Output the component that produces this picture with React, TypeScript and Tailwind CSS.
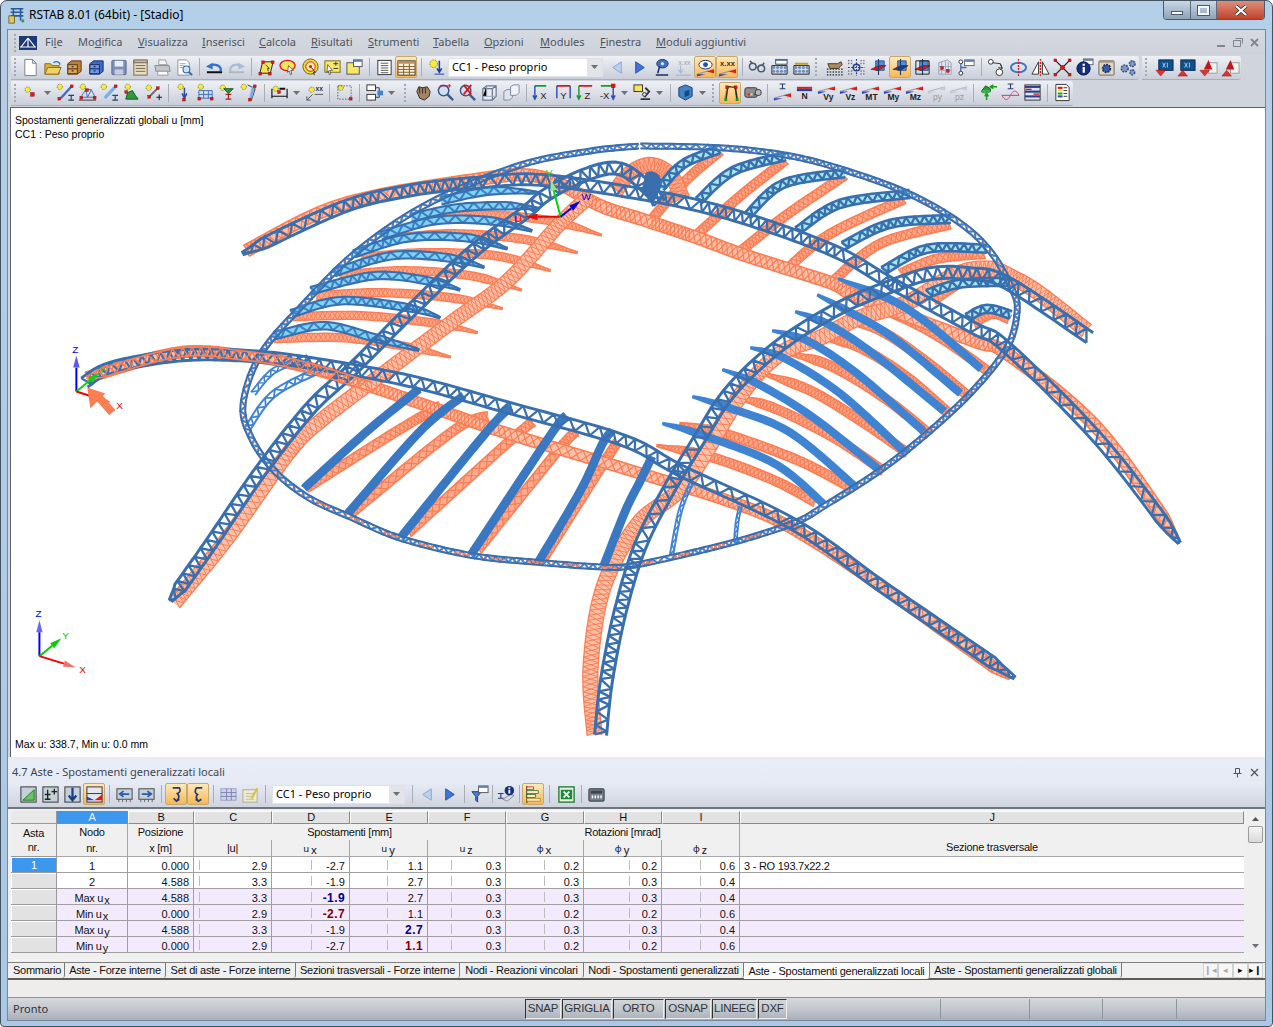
import React from "react";

type P = [number, number];

// ---- truss geometry, all coordinates are page pixels ----
function sample(pts: P[], step: number): P[] {
  const out: P[] = [];
  for (let i = 0; i < pts.length - 1; i++) {
    const p0 = pts[Math.max(i - 1, 0)];
    const p1 = pts[i];
    const p2 = pts[i + 1];
    const p3 = pts[Math.min(i + 2, pts.length - 1)];
    for (let k = 0; k < 16; k++) {
      const t = k / 16;
      const t2 = t * t;
      const t3 = t2 * t;
      out.push([
        0.5 * (2 * p1[0] + (p2[0] - p0[0]) * t + (2 * p0[0] - 5 * p1[0] + 4 * p2[0] - p3[0]) * t2 + (3 * p1[0] - p0[0] - 3 * p2[0] + p3[0]) * t3),
        0.5 * (2 * p1[1] + (p2[1] - p0[1]) * t + (2 * p0[1] - 5 * p1[1] + 4 * p2[1] - p3[1]) * t2 + (3 * p1[1] - p0[1] - 3 * p2[1] + p3[1]) * t3),
      ]);
    }
  }
  out.push(pts[pts.length - 1]);
  const res: P[] = [out[0]];
  let acc = 0;
  for (let i = 1; i < out.length; i++) {
    acc += Math.hypot(out[i][0] - out[i - 1][0], out[i][1] - out[i - 1][1]);
    if (acc >= step) {
      res.push(out[i]);
      acc = 0;
    }
  }
  return res;
}

const toD = (pts: P[]) => "M" + pts.map((p) => `${p[0].toFixed(1)} ${p[1].toFixed(1)}`).join("L");

interface TrussProps {
  pts: P[];
  w: number;
  c: string;
  step?: number;
  chord?: number;
  zig?: number;
  fill?: string;
  tapS?: number;
  tapE?: number;
  c2?: string;
  cross?: boolean;
}

const Truss: React.FC<TrussProps> = ({ pts, w, c, step = 5, chord = 1.8, zig = 1.4, fill, tapS = 0, tapE = 0, c2, cross }) => {
  const line = sample(pts, step);
  const top: P[] = [];
  const bot: P[] = [];
  const n = line.length;
  line.forEach((p, i) => {
    const a = line[Math.max(i - 1, 0)];
    const b = line[Math.min(i + 1, n - 1)];
    const dx = b[0] - a[0];
    const dy = b[1] - a[1];
    const len = Math.hypot(dx, dy) || 1;
    let f = 1;
    if (tapS > 0) f = Math.min(f, 0.2 + (0.8 * (i * step)) / tapS);
    if (tapE > 0) f = Math.min(f, 0.2 + (0.8 * ((n - 1 - i) * step)) / tapE);
    const h = (w / 2) * f;
    top.push([p[0] - (dy / len) * h, p[1] + (dx / len) * h]);
    bot.push([p[0] + (dy / len) * h, p[1] - (dx / len) * h]);
  });
  const zigPts: P[] = line.map((_, i) => (i % 2 ? top[i] : bot[i]));
  const zagPts: P[] = line.map((_, i) => (i % 2 ? bot[i] : top[i]));
  return (
    <g fill="none" strokeLinejoin="round">
      {fill && <path d={toD(top) + "L" + toD([...bot].reverse()).slice(1) + "Z"} fill={fill} stroke="none" />}
      <path d={toD(zigPts)} stroke={c2 || c} strokeWidth={zig} />
      {cross && <path d={toD(zagPts)} stroke={c2 || c} strokeWidth={zig} />}
      <path d={toD(top)} stroke={c} strokeWidth={chord} />
      <path d={toD(bot)} stroke={c} strokeWidth={chord} />
    </g>
  );
};

const B = "#3a6fae";
const L = "#3f84d2";
const O = "#fb7d53";
const OF = "#fda98d";
const OA = "#fdbfa8";
const CY = "#7ed2f2";

const ARCH_A: P[] = [[241, 253], [340, 207], [407, 190], [473, 182], [540, 179], [640, 193], [707, 207], [773, 227], [840, 253], [890, 282], [973, 327], [1007, 347], [1100, 440], [1180, 543]];
const ARCH_B: P[] = [[83, 382], [110, 367], [177, 355], [243, 355], [307, 362], [407, 380], [507, 407], [623, 440], [680, 470], [795, 525], [880, 585], [960, 640], [1015, 678]];
const ARCH_C: P[] = [[169, 601], [210, 543], [260, 470], [310, 407], [353, 367], [413, 307], [473, 250], [523, 213], [547, 193], [587, 173], [620, 168], [650, 190], [660, 205]];
const ARCH_D: P[] = [[1090, 337], [1007, 282], [970, 273], [930, 273], [887, 287], [840, 307], [790, 337], [750, 370], [723, 400], [700, 437], [668, 490], [640, 545], [620, 610], [606, 680], [600, 735]];
const ORANGE_A: P[] = [[245, 250], [340, 204], [473, 179], [540, 176], [600, 205], [640, 218], [697, 237], [740, 253], [787, 268], [833, 283], [860, 297], [973, 340], [1007, 353], [1097, 427], [1178, 538]];
const ORANGE_B: P[] = [[85, 377], [177, 352], [243, 355], [300, 365], [373, 387], [440, 410], [507, 433], [640, 473], [735, 503], [790, 527], [868, 577], [980, 657], [1012, 680]];
const ORANGE_C: P[] = [[173, 603], [227, 537], [287, 453], [320, 420], [390, 367], [453, 320], [507, 280], [560, 222], [590, 195]];
const ORANGE_D: P[] = [[1087, 330], [1040, 293], [1013, 277], [990, 268], [957, 273], [917, 297], [893, 307], [857, 318], [820, 337], [780, 353], [740, 395], [685, 483], [638, 523], [603, 587], [590, 667], [594, 735]];
const RING: P[] = [[640, 145], [723, 147], [790, 155], [847, 170], [907, 192], [957, 220], [990, 250], [1013, 290], [1017, 313], [1007, 347], [973, 390], [927, 433], [880, 470], [825, 505], [795, 522], [740, 540], [680, 555], [633, 565], [607, 567], [537, 562], [470, 555], [400, 538], [350, 517], [307, 497], [273, 470], [250, 437], [242, 403], [260, 353], [303, 303], [357, 250], [427, 203], [517, 165], [590, 150], [640, 145]];

// ribs on the back left (lit, cyan web)
const RIBS_LEFT: P[][] = [
  [[273, 335], [323, 325], [373, 337], [420, 350]],
  [[290, 313], [340, 300], [407, 307], [442, 318]],
  [[310, 290], [373, 275], [427, 280], [462, 290]],
  [[333, 272], [390, 255], [447, 257], [485, 267]],
  [[353, 253], [407, 237], [467, 237], [507, 248]],
  [[380, 235], [433, 220], [490, 220], [535, 231]],
  [[410, 217], [457, 207], [507, 205], [540, 208]],
  [[440, 200], [490, 190], [540, 192]],
];
const RIBS_LEFT_O: P[][] = [
  [[273, 338], [340, 337], [400, 345], [452, 357]],
  [[292, 316], [360, 315], [430, 322], [477, 332]],
  [[315, 295], [380, 292], [450, 297], [502, 308]],
  [[338, 275], [400, 270], [470, 275], [523, 290]],
  [[360, 257], [420, 252], [495, 255], [550, 270]],
  [[388, 238], [450, 233], [520, 238], [577, 252]],
  [[420, 220], [480, 214], [550, 220], [603, 235]],
];
// ribs on the back right
const RIBS_TOP: P[][] = [
  [[660, 187], [683, 163], [720, 148]],
  [[698, 200], [733, 170], [787, 155]],
  [[747, 215], [783, 183], [847, 172]],
  [[797, 230], [840, 203], [910, 193]],
  [[843, 245], [890, 223], [953, 218]],
  [[883, 270], [927, 248], [987, 248]],
  [[927, 293], [960, 283], [1010, 281]],
  [[967, 317], [987, 308], [1013, 315]],
];
const RIBS_TOP_O: P[][] = [
  [[650, 220], [685, 180], [720, 150]],
  [[693, 237], [740, 195], [787, 158]],
  [[737, 253], [785, 215], [847, 173]],
  [[787, 268], [830, 233], [907, 197]],
  [[830, 283], [880, 243], [953, 223]],
  [[900, 273], [937, 258], [987, 253]],
  [[933, 300], [973, 276], [1010, 278]],
  [[973, 323], [993, 313], [1012, 320]],
];
// ribs on the right, stub past arch D then down to the ring
const RIBS_RIGHT: P[][] = [
  [[838, 278], [893, 300], [933, 327], [983, 370]],
  [[817, 294], [847, 310], [893, 337], [963, 395]],
  [[795, 311], [827, 323], [873, 353], [947, 413]],
  [[772, 330], [807, 340], [857, 373], [926, 433]],
  [[750, 347], [783, 357], [840, 393], [905, 452]],
  [[722, 369], [757, 383], [813, 417], [880, 470]],
  [[692, 396], [728, 407], [790, 432], [856, 487]],
  [[662, 423], [697, 433], [774, 463], [825, 505]],
];
const RIBS_RIGHT_O: P[][] = [
  [[860, 300], [905, 318], [945, 340], [990, 372]],
  [[840, 320], [880, 330], [925, 360], [970, 397]],
  [[810, 335], [855, 345], [905, 375], [950, 414]],
  [[785, 352], [830, 365], [885, 398], [930, 434]],
  [[760, 372], [810, 390], [860, 420], [908, 453]],
  [[730, 395], [775, 408], [835, 438], [884, 471]],
  [[679, 423], [724, 433], [798, 460], [852, 488]],
  [[656, 445], [712, 457], [774, 480], [817, 503]],
];
// ribs at the front
const RIBS_FRONT: P[][] = [
  [[303, 488], [367, 430], [420, 387]],
  [[347, 513], [420, 430], [463, 395]],
  [[400, 537], [487, 430], [510, 407]],
  [[470, 555], [553, 430], [567, 415]],
  [[537, 563], [580, 490], [602, 443], [612, 430]],
  [[603, 566], [625, 510], [640, 480], [652, 455]],
];
const RIBS_FRONT_O: P[][] = [
  [[305, 488], [397, 430], [440, 405]],
  [[350, 513], [453, 430], [490, 415]],
  [[407, 533], [513, 437], [535, 420]],
  [[477, 550], [560, 447], [578, 430]],
  [[543, 558], [603, 463], [618, 440]],
];

const Arrow: React.FC<{ x1: number; y1: number; x2: number; y2: number; c: string; lite?: string }> = ({ x1, y1, x2, y2, c, lite }) => {
  const a = Math.atan2(y2 - y1, x2 - x1);
  const sx = x2 - Math.cos(a) * 12;
  const sy = y2 - Math.sin(a) * 12;
  const nx = -Math.sin(a) * 3.2;
  const ny = Math.cos(a) * 3.2;
  return (
    <g>
      <line x1={x1} y1={y1} x2={sx} y2={sy} stroke={c} strokeWidth="2" />
      <polygon points={`${x2},${y2} ${sx + nx},${sy + ny} ${sx - nx},${sy - ny}`} fill={lite || c} />
    </g>
  );
};

const Stadium: React.FC = () => (
  <svg className="block w-full h-full" viewBox="10 107 1255 650" fontFamily="Liberation Sans, sans-serif">
    {/* deformed shape */}
    <Truss pts={RING} w={5} c={O} step={3.5} chord={1} zig={0.8} cross />
    {RIBS_LEFT_O.map((r, i) => <Truss key={i} pts={r} w={8} c={O} step={3.2} chord={1.4} zig={1} fill={OF} cross tapE={28} />)}
    {RIBS_TOP_O.map((r, i) => <Truss key={i} pts={r} w={9} c={O} step={3.2} chord={1.5} zig={1.1} fill={OF} cross />)}
    {RIBS_RIGHT_O.map((r, i) => <Truss key={i} pts={r} w={9} c={O} step={3.2} chord={1.5} zig={1.1} fill={OF} cross tapS={24} />)}
    {RIBS_FRONT_O.map((r, i) => <Truss key={i} pts={r} w={9} c={O} step={3} chord={1.5} zig={1.2} fill={OF} cross />)}
    <Truss pts={[[615, 190], [630, 172], [650, 164], [670, 174], [682, 198]]} w={15} c={O} step={2.8} chord={1.2} zig={1} fill={OF} cross />
    <Truss pts={ORANGE_A} w={12} c={O} step={3.6} chord={1.6} zig={1.2} fill={OA} cross tapE={14} />
    <Truss pts={ORANGE_B} w={11} c={O} step={3.6} chord={1.6} zig={1.2} fill={OA} cross tapE={14} />
    <Truss pts={ORANGE_C} w={14} c={O} step={3.2} chord={1.3} zig={1} fill={OA} cross />
    <Truss pts={ORANGE_D} w={15} c={O} step={3.2} chord={1.3} zig={1} fill={OA} cross />

    {/* undeformed shape */}
    {RIBS_LEFT.map((r, i) => <Truss key={i} pts={r} w={7.5} c={B} c2="#3d7fc8" fill={CY} step={4} chord={2.1} zig={2.1} tapE={26} />)}
    {RIBS_TOP.map((r, i) => <Truss key={i} pts={r} w={8} c={B} fill="#a4e6f2" step={3.5} chord={2.6} zig={2.4} />)}
    {RIBS_RIGHT.map((r, i) => <Truss key={i} pts={r} w={6} c={L} fill={L} step={5} chord={2.2} zig={1.5} tapS={26} />)}
    {RIBS_FRONT.map((r, i) => <Truss key={i} pts={r} w={6.5} c="#3a78c2" fill="#3a78c2" step={5} chord={2.2} zig={1.5} />)}
    <Truss pts={[[671, 555], [680, 510], [693, 478]]} w={3.5} c={L} step={4} chord={1.8} zig={1.6} />
    <Truss pts={[[735, 542], [737, 520], [741, 503]]} w={3} c={L} step={4} chord={1.6} zig={1.6} />
    <Truss pts={[[247, 427], [273, 393], [323, 367]]} w={6} c={L} step={4} chord={2} zig={1.8} />
    <Truss pts={[[252, 393], [273, 370], [307, 357]]} w={5} c={L} step={4} chord={1.8} zig={1.6} />
    <Truss pts={RING} w={5} c={B} c2={L} step={3.5} chord={2} zig={2} />
    <path d={toD(sample(RING.slice(14, 24), 3))} fill="none" stroke={O} strokeWidth="2" strokeDasharray="3 1 3 1 3 1 3 22" />
    <Truss pts={ARCH_A} w={11} c={B} step={4} chord={2.9} zig={2.2} tapS={14} tapE={18} />
    <Truss pts={ARCH_B} w={11} c={B} step={4} chord={2.9} zig={2.2} tapE={20} />
    <Truss pts={ARCH_C} w={12} c={B} step={4} chord={3} zig={2.3} tapS={12} />
    <Truss pts={ARCH_D} w={12} c={B} step={4} chord={3} zig={2.3} />
    {/* left end of arch B carries the orange over the blue */}
    <Truss pts={ORANGE_B.slice(0, 5)} w={9} c={O} step={4} chord={1.6} zig={1.3} tapS={10} />
    <path d="M645 172a11 12 0 0 1 14 18l-6 12-12-12z" fill={B} />

    {/* triad at the model */}
    <Arrow x1={560} y1={216} x2={525} y2={216} c="#f00000" />
    <Arrow x1={560} y1={216} x2={550} y2={178} c="#00d800" lite="#90e890" />
    <Arrow x1={560} y1={216} x2={580} y2={200} c="#0000e0" />
    <text x="514" y="221" fontSize="10" fill="#e00000">U</text>
    <text x="545" y="175" fontSize="10" fill="#00e000">V</text>
    <text x="581" y="199" fontSize="10" fill="#0000e0">W</text>

    {/* triad at the first node with the load arrow */}
    <Arrow x1={75} y1={391} x2={75} y2={355} c="#0000f0" lite="#5a5af0" />
    <Arrow x1={75} y1={391} x2={98} y2={372} c="#10d010" />
    <Arrow x1={75} y1={391} x2={110} y2={402} c="#f00000" lite="#f06060" />
    <text x="71" y="352" fontSize="10" fill="#0000e0">Z</text>
    <text x="98" y="372" fontSize="10" fill="#20c020">Y</text>
    <text x="115" y="408" fontSize="10" fill="#e00000">X</text>
    <line x1="97" y1="396" x2="111" y2="412" stroke={O} strokeWidth="8" />
    <polygon points="86,387 104,393 89,408" fill={O} />

    {/* global triad */}
    <Arrow x1={38} y1={656} x2={38} y2={620} c="#0000f0" lite="#6a6af0" />
    <Arrow x1={38} y1={656} x2={60} y2={638} c="#00d000" />
    <Arrow x1={38} y1={656} x2={74} y2={667} c="#f00000" lite="#f07070" />
    <text x="34" y="617" fontSize="10" fill="#0000e0">Z</text>
    <text x="61" y="639" fontSize="10" fill="#00c000">Y</text>
    <text x="78" y="673" fontSize="10" fill="#e00000">X</text>
  </svg>
);

// ---- toolbar icons ----
const St: React.FC<{ x: number; y: number; r?: number }> = ({ x, y, r = 2.8 }) => (
  <g>
    <circle cx={x} cy={y} r={r} fill="#f7ec38" stroke="#4a4a20" strokeWidth=".7" strokeDasharray="1 .8" />
  </g>
);
const Rq: React.FC<{ x: number; y: number; s?: number }> = ({ x, y, s = 3 }) => <rect x={x} y={y} width={s} height={s} fill="#e21616" stroke="#7a1010" strokeWidth=".4" />;
const Beam: React.FC<{ x: number; y: number }> = ({ x, y }) => <path d={`M${x} ${y}h6M${x + 3} ${y}v5M${x} ${y + 5}h6`} stroke="#2a3f70" strokeWidth="1.2" fill="none" />;
const Lbl: React.FC<{ x: number; y: number; t: string; s?: number; c?: string; w?: boolean }> = ({ x, y, t, s = 9, c = "#222", w = true }) => (
  <text x={x} y={y} fontSize={s} fill={c} fontWeight={w ? 700 : 400} textAnchor="middle" fontFamily="Liberation Sans, sans-serif">{t}</text>
);
const Dia: React.FC<{ grey?: boolean }> = ({ grey }) => (
  <g>
    <path d="M1 9L19 4" stroke={grey ? "#aab0c4" : "#8a8f9a"} strokeWidth="1" />
    <polygon points="11,6.2 19,4 19,8" fill={grey ? "#c7c9dc" : "#e31a1a"} />
    <polygon points="1,9 10,9 1,11.5" fill={grey ? "#c7c9dc" : "#2a3fd0"} />
  </g>
);
const Plane: React.FC<{ c?: string }> = ({ c = "#d81818" }) => (
  <g>
    <polygon points="7,3 16,3 16,13 7,13" fill="#4e8fd8" stroke="#1a3f7a" strokeWidth=".8" />
    <polygon points="2,12 10,8 18,8 10,13" fill={c} stroke="#5a1010" strokeWidth=".6" />
    <path d="M10 1v17" stroke="#1a3f7a" strokeWidth="1.2" />
  </g>
);
const Abacus: React.FC = () => (
  <g>
    <path d="M2 8v9M18 8v9M2 17h16M2 8h16" stroke="#222" strokeWidth="1" fill="none" />
    {[4, 8, 12, 16].map((x) => <circle key={x} cx={x} cy="10" r="1.6" fill="#6f8fc0" />)}
    {[4, 8, 12, 16].map((x) => <circle key={x} cx={x} cy="14" r="1.6" fill="#6f8fc0" />)}
  </g>
);
const Bars: React.FC<{ y: number; c: string }> = ({ y, c }) => <rect x="2" y={y} width="16" height="2.2" fill={c} />;
const ArrowY: React.FC<{ c?: string; x?: number }> = ({ c = "#16a016", x = 10 }) => <path d={`M${x} 3v11M${x - 2.5} 11l2.5 4 2.5-4`} stroke={c} strokeWidth="1.6" fill="none" />;

const ICONS: Record<string, React.ReactNode> = {
  // file group
  new: <path d="M4 1.5h8l4 4v13H4z M12 1.5v4h4" fill="#fff" stroke="#7b7f86" />,
  open: <g><path d="M2 6h6l1.5 2H17v9H2z" fill="#d9b23c" stroke="#8a6c16" /><path d="M2 17l3-7h14l-3 7z" fill="#f0d26a" stroke="#8a6c16" /><path d="M11 5a4 3 0 0 1 6 0l1 2" stroke="#2f74c8" strokeWidth="1.5" fill="none" /></g>,
  drB: <g><path d="M3 6l4-3h10v11l-4 3H3z" fill="#b97f3c" stroke="#5c3a14" /><rect x="3" y="7" width="10" height="4.5" fill="#d9a45c" stroke="#5c3a14" /><rect x="3" y="11.5" width="10" height="5" fill="#d9a45c" stroke="#5c3a14" /><rect x="7" y="8.5" width="2" height="1.2" fill="#3a2208" /><rect x="7" y="13" width="2" height="1.2" fill="#3a2208" /></g>,
  drBl: <g><path d="M3 6l4-3h10v11l-4 3H3z" fill="#3f69c4" stroke="#1a2f6a" /><rect x="3" y="7" width="10" height="4.5" fill="#6f9ae8" stroke="#1a2f6a" /><rect x="3" y="11.5" width="10" height="5" fill="#6f9ae8" stroke="#1a2f6a" /><rect x="7" y="8.5" width="2" height="1.2" fill="#10204a" /><rect x="7" y="13" width="2" height="1.2" fill="#10204a" /></g>,
  save: <g><rect x="3" y="2.5" width="15" height="15" rx="1" fill="#7f8fb8" stroke="#5a6a90" /><rect x="6" y="3" width="9" height="6" fill="#e9edf5" /><rect x="6" y="12" width="9" height="5.5" fill="#c5cde0" /></g>,
  notes: <g><rect x="3" y="3" width="14" height="15" fill="#eadcc0" stroke="#6f6450" /><rect x="3" y="2" width="14" height="3" fill="#c9b89a" stroke="#6f6450" /><path d="M5 8h10M5 11h10M5 14h10" stroke="#6f6450" /></g>,
  print: <g><path d="M6 2h7l2 5H6z" fill="#f5f5f5" stroke="#9a9a9a" /><path d="M2 8h15l1 6H3z" fill="#c3c6cc" stroke="#85888e" /><path d="M5 14h10l1 4H5z" fill="#fff" stroke="#9a9a9a" /></g>,
  prev: <g><path d="M3 2h9l3 3v13H3z" fill="#fff" stroke="#8a8f96" /><path d="M5 6h6M5 8h5M5 10h4" stroke="#a0a5ad" /><circle cx="12" cy="12" r="3.6" fill="#cfe2f7" stroke="#3a6a9a" strokeWidth="1.2" /><path d="M14.5 14.5l3.5 3.5" stroke="#3a6a9a" strokeWidth="2" /></g>,
  undo: <g><path d="M4.5 9a7 5.5 0 0 1 12 2v3" fill="none" stroke="#2f74c8" strokeWidth="2.4" /><path d="M2 15h16" stroke="#111" strokeWidth="2" /><polygon points="1,9 8,5 8,12" fill="#2f74c8" /></g>,
  redo: <g><path d="M15.5 9a7 5.5 0 0 0-12 2v3" fill="none" stroke="#a8bcd8" strokeWidth="2.4" /><path d="M2 15h16" stroke="#b0b6c0" strokeWidth="2" /><polygon points="19,9 12,5 12,12" fill="#a8bcd8" /></g>,
  para: <g><polygon points="6,4 17,4 14,16 3,16" fill="#f6e45a" stroke="#222" /><Rq x={5} y={3} /><Rq x={15} y={3} /><Rq x={2} y={15} /><Rq x={12} y={15} /><path d="M9 7l4 4-2 0 1 3" stroke="#444" fill="none" /></g>,
  ell: <g><ellipse cx="9" cy="8" rx="8" ry="5.5" fill="#f6e45a" stroke="#d81818" strokeWidth="1.4" /><path d="M10 8l5 5-2.5 0 1 4-1.5 .6-1-4-2 1.5z" fill="#fff" stroke="#333" strokeWidth=".7" /></g>,
  tgt: <g><circle cx="10" cy="9" r="8" fill="#f0d93c" stroke="#7a5c10" /><circle cx="10" cy="9" r="5" fill="#f7f0a0" stroke="#d81818" /><circle cx="10" cy="9" r="1.6" fill="#d81818" /><path d="M11 10l4 5-2 0 1 3" stroke="#333" fill="none" /></g>,
  noteP: <g><rect x="2" y="3" width="16" height="12" fill="#f8e868" stroke="#7a6a20" /><path d="M11 6h5M13.5 4v4M11 11h5" stroke="#333" /><path d="M5 7l5 6-3 0 1 4-1.4 .5-1-4-1.6 1.5z" fill="#fff" stroke="#333" strokeWidth=".7" /></g>,
  winY: <g><rect x="2" y="5" width="13" height="12" fill="#f8e868" stroke="#555" /><rect x="9" y="2" width="9" height="7" fill="#fff" stroke="#555" /><rect x="9" y="2" width="9" height="2" fill="#5f7fb0" /></g>,
  tblL: <g><rect x="3" y="2.5" width="14" height="15" fill="#fff" stroke="#333" /><path d="M6 5.5h8M6 8h8M6 10.5h8M6 13h8M6 15.5h8" stroke="#555" /></g>,
  tbl: <g><rect x="1" y="3" width="18" height="15" fill="#fff3d8" stroke="#333" /><rect x="1" y="3" width="18" height="3" fill="#b9905c" /><path d="M1 9h18M1 12h18M1 15h18M7 6v12M13 6v12" stroke="#7a5c30" /></g>,
  load: <g><St x={7} y={6} r={4} /><ArrowY c="#1a3fa8" x={13} /><path d="M8 17h10" stroke="#1a3fa8" /></g>,
  left: <polygon points="5,10 14,4 14,16" fill="#bcd0ee" stroke="#8aa4d0" />,
  right: <polygon points="15,10 6,4 6,16" fill="#3f74d8" stroke="#2a50a8" />,
  key: <g><ellipse cx="11" cy="6" rx="6" ry="4.5" fill="#3f74c8" stroke="#1a2f6a" /><path d="M8 9l-2 7M4 18h13" stroke="#1a2f6a" strokeWidth="1.6" /><circle cx="11" cy="6" r="1.5" fill="#fff" /></g>,
  xxG: <g><Lbl x={11} y={7} t="x.xx" s={7} c="#9aa0aa" w={false} /><path d="M7 8v7M4.5 12l2.5 4 2.5-4" stroke="#9ab0d0" fill="none" /><path d="M2 18h16" stroke="#b0b0b0" /></g>,
  eye: <g><ellipse cx="10" cy="7" rx="7" ry="4.5" fill="#fff" stroke="#1a2f6a" /><circle cx="10" cy="7" r="2.6" fill="#2a4fa8" /><g transform="translate(0 8)"><Dia /></g></g>,
  xx: <g><Lbl x={10} y={8} t="x.xx" s={8} c="#5a2a00" /><g transform="translate(0 8)"><Dia /></g></g>,
  glass: <g><circle cx="5" cy="9" r="3.5" fill="none" stroke="#4a5a70" strokeWidth="1.6" /><circle cx="14" cy="11" r="3.5" fill="none" stroke="#4a5a70" strokeWidth="1.6" /><path d="M2 3l3 3M9 10l2 0M17 5l-2 3" stroke="#4a5a70" strokeWidth="1.6" /></g>,
  ab1: <g><Abacus /><rect x="6" y="1.5" width="12" height="5" fill="#fff" stroke="#444" /><rect x="6" y="1.5" width="12" height="1.6" fill="#5f7fb0" /></g>,
  ab2: <g><Abacus /><path d="M3 6h14" stroke="#c0a020" strokeWidth="2" /></g>,
  hand: <g><path d="M3 6h10l4-2 1 3-4 4H5z" fill="#b08a60" stroke="#4a3a20" /><g fill="#333">{[2, 5, 8, 11, 14, 17].map((x) => [11, 14, 17].map((y) => <rect key={`${x}${y}`} x={x} y={y} width="1.5" height="1.5" />))}</g></g>,
  dots: <g><circle cx="10" cy="10" r="3.5" fill="none" stroke="#2a3f90" strokeWidth="1.6" /><path d="M10 1v18M1 10h18" stroke="#2a3f90" strokeWidth="1.2" strokeDasharray="2 1.5" /><g fill="#777">{[2, 5, 15, 18].map((x) => [3, 6, 14, 17].map((y) => <rect key={`${x}${y}`} x={x - 1} y={y - 1} width="1.5" height="1.5" />))}</g></g>,
  pl1: <Plane />,
  pl2: <Plane c="#1a3f7a" />,
  pl3: <g><Plane /><path d="M3 3h14v14H3z" fill="none" stroke="#222" /></g>,
  grid3: <g><path d="M4 5l9-3 4 3v12H4z" fill="#e0e4f0" stroke="#9aa0b8" /><path d="M7 4v13M11 3v14M14 4v13M4 9h13M4 13h13" stroke="#a0a6c0" /><Rq x={6} y={9} /><Rq x={12} y={12} /></g>,
  conn: <g><circle cx="4" cy="4" r="2" fill="#fff" stroke="#333" /><circle cx="4" cy="16" r="2" fill="#fff" stroke="#333" /><path d="M4 6v8M4 10h6" stroke="#4a6aa8" strokeWidth="1.4" /><rect x="8" y="2" width="10" height="6" fill="#fff" stroke="#666" /><rect x="8" y="2" width="10" height="2" fill="#5f7fb0" /></g>,
  node2: <g><circle cx="4" cy="4" r="2.5" fill="#fff" stroke="#333" /><circle cx="13" cy="15" r="3.5" fill="#fff" stroke="#333" /><path d="M6 5l8 1 2 5M14 6l2 5-4-1" stroke="#333" fill="none" /></g>,
  rot: <g><ellipse cx="10" cy="10" rx="8" ry="5" fill="none" stroke="#3f74c8" strokeWidth="2" /><path d="M10 1v18" stroke="#d81818" strokeDasharray="2 1.2" strokeWidth="1.4" /></g>,
  mir: <g><polygon points="8,4 8,17 1,17" fill="#fff" stroke="#333" /><polygon points="12,4 12,17 19,17" fill="#fff" stroke="#333" /><path d="M10 1v18" stroke="#d81818" strokeDasharray="2 1.2" strokeWidth="1.4" /></g>,
  cross: <g><path d="M3 3l14 14M17 3L3 17" stroke="#222" strokeWidth="1.4" /><circle cx="10" cy="10" r="2.6" fill="#d81818" /><Rq x={1} y={1} /><Rq x={16} y={1} /><Rq x={1} y={16} /><Rq x={16} y={16} /></g>,
  info: <g><rect x="9" y="1" width="10" height="6" fill="#fff" stroke="#666" /><rect x="9" y="1" width="10" height="2" fill="#5f7fb0" /><circle cx="9" cy="11" r="7" fill="#14307a" stroke="#0a1a4a" /><rect x="8" y="9.5" width="2.4" height="6" fill="#fff" /><rect x="8" y="6" width="2.4" height="2.2" fill="#fff" /></g>,
  cfg: <g><rect x="2" y="3" width="16" height="15" rx="1" fill="#e6d6b8" stroke="#666" /><circle cx="10" cy="11" r="4" fill="#3a5fa0" stroke="#1a2f6a" strokeWidth="2" strokeDasharray="2 1" /><rect x="2" y="3" width="16" height="2" fill="#a89878" /></g>,
  gears: <g><circle cx="6" cy="11" r="3.6" fill="#7a9ac8" stroke="#3a4f80" strokeWidth="1.6" strokeDasharray="2 1" /><circle cx="14" cy="6" r="3" fill="#7a9ac8" stroke="#3a4f80" strokeWidth="1.6" strokeDasharray="2 1" /><circle cx="14" cy="15" r="2.6" fill="#7a9ac8" stroke="#3a4f80" strokeWidth="1.4" strokeDasharray="2 1" /></g>,
  expA: <g><rect x="4" y="2" width="15" height="11" fill="#12508a" stroke="#0a2a50" /><path d="M8 5l3 5M11 5l-3 5M13 5v5" stroke="#9ad0f0" /><polygon points="1,13 11,13 6,19" fill="#e43030" stroke="#901010" strokeWidth=".5" /></g>,
  expB: <g><rect x="4" y="2" width="15" height="11" fill="#12508a" stroke="#0a2a50" /><path d="M8 5l3 5M11 5l-3 5M13 5v5" stroke="#9ad0f0" /><polygon points="1,19 11,19 6,13" fill="#e43030" stroke="#901010" strokeWidth=".5" /></g>,
  expC: <g><rect x="10" y="5" width="9" height="11" fill="#f3f3f3" stroke="#9a9a9a" /><polygon points="5,12 10,2 14,12" fill="#c01818" /><polygon points="1,13 11,13 6,19" fill="#e43030" stroke="#901010" strokeWidth=".5" /></g>,
  expD: <g><rect x="10" y="5" width="9" height="11" fill="#f3f3f3" stroke="#9a9a9a" /><polygon points="5,12 10,2 14,12" fill="#c01818" /><polygon points="1,19 11,19 6,13" fill="#e43030" stroke="#901010" strokeWidth=".5" /></g>,
  // second row
  add: <g><St x={7} y={7} /><Rq x={10} y={10} s={4} /></g>,
  barI: <g><St x={4} y={4} /><path d="M5 16L16 4" stroke="#3a6ec0" strokeWidth="2.4" /><Rq x={2} y={15} /><Rq x={15} y={2} /><Beam x={13} y={13} /></g>,
  truss: <g><St x={5} y={4} /><path d="M3 15l5-8 6 0 4 8zM8 7l2 8 4-8" stroke="#3a6ec0" fill="none" /><Rq x={2} y={14} /><Rq x={16} y={14} /><Rq x={8} y={6} /><path d="M1 18h18" stroke="#333" /></g>,
  barI2: <g><St x={4} y={4} /><path d="M5 16L16 4" stroke="#7ab0ea" strokeWidth="3.4" /><Rq x={15} y={2} /><Beam x={13} y={13} /></g>,
  supG: <g><St x={6} y={4} /><Rq x={3} y={8} /><path d="M6 10l5-2 3 5 3 4H4z" fill="#2f9a3c" stroke="#175a20" /></g>,
  edit: <g><St x={5} y={5} /><path d="M6 14l8-8" stroke="#6a6a6a" strokeWidth="2" /><Rq x={4} y={13} /><Rq x={13} y={4} /><path d="M13 15h6M16 12v6" stroke="#111" /></g>,
  lod: <g><St x={7} y={4} /><path d="M11 5v10M8.5 11l2.5 5 2.5-5" stroke="#2a4fa8" strokeWidth="1.6" fill="none" /><Rq x={9} y={16} /></g>,
  lodT: <g><St x={5} y={4} /><path d="M3 8h14v8H3zM3 12h14M8 8v8M13 8v8" stroke="#3a6ec0" fill="none" /><Rq x={2} y={15} /><Rq x={15} y={15} /></g>,
  sup: <g><St x={5} y={5} /><path d="M6 6h10l-5 5z" fill="#2f9a3c" stroke="#175a20" /><path d="M11 11v6M8 12h6M8 17h6" stroke="#b01818" strokeWidth="1.2" /></g>,
  col: <g><St x={4} y={4} /><path d="M8 2l8 4-4 12" stroke="#333" fill="none" /><path d="M14 4l-3 13" stroke="#7ab0ea" strokeWidth="3" /><Rq x={14} y={2} /><Rq x={9} y={16} /></g>,
  dim: <g><St x={6} y={6} /><path d="M2 6v10M18 6v10M2 14h16" stroke="#111" strokeWidth="1.2" /><path d="M10 6h6" stroke="#111" strokeWidth="2" /><Rq x={8} y={8} /></g>,
  dimX: <g><St x={7} y={7} /><Lbl x={15} y={8} t="xx" s={7} c="#333" /><path d="M2 18l6-6M2 14v4h4M10 12h9" stroke="#555" fill="none" /></g>,
  sel: <g><St x={6} y={5} /><rect x="3" y="3" width="14" height="14" fill="none" stroke="#555" strokeDasharray="1.5 1.5" /><Rq x={15} y={15} /></g>,
  flow: <g><rect x="2" y="2" width="9" height="6" fill="#fff" stroke="#333" /><rect x="2" y="12" width="9" height="6" fill="#fff" stroke="#333" /><path d="M11 5h4v10h-4" stroke="#333" fill="none" /><rect x="13" y="8" width="6" height="5" fill="#3f84d2" /></g>,
  hand2: <g><path d="M3 9l2-5 4 1 5-1 3 5-1 5-5 4-5-2z" fill="#a08468" stroke="#3a2a20" /><path d="M6 5v6M9 5v6M12 5v6" stroke="#3a2a20" /></g>,
  zoomP: <g><circle cx="8" cy="8" r="5.5" fill="#cfe0f5" stroke="#3a5a8a" strokeWidth="1.6" /><path d="M12 12l6 6" stroke="#3a5a8a" strokeWidth="2.4" /><path d="M4 3h12M14 1v4" stroke="#d81818" /></g>,
  zoomX: <g><circle cx="8" cy="8" r="5.5" fill="#cfe0f5" stroke="#3a5a8a" strokeWidth="1.6" /><path d="M12 12l6 6" stroke="#3a5a8a" strokeWidth="2.4" /><path d="M6 2l8 10M14 2L6 12" stroke="#d81818" strokeWidth="1.8" /></g>,
  cube: <g><path d="M3 6l4-3h10v11l-4 4H3z M3 6h10v12 M13 6l4-3" fill="#e8ecf2" stroke="#6a7a90" strokeWidth="1.3" /><path d="M7 3v11H3M7 14h10" stroke="#9aa6b8" /></g>,
  cube2: <g><path d="M2 9l3-2h6v8l-3 3H2z" fill="#dfe4ec" stroke="#7a8aa0" /><path d="M9 4l3-2h6v8l-3 3H9z" fill="#eef1f5" stroke="#7a8aa0" /></g>,
  vx: <g><path d="M3 3h12" stroke="#1a9a30" strokeWidth="2" /><path d="M3 3v13M1 13l2 4 2-4" stroke="#2a4fb8" strokeWidth="1.5" fill="none" /><Lbl x={12} y={17} t="X" s={10} w={false} /></g>,
  vy: <g><path d="M3 3h14" stroke="#d81818" strokeWidth="2" /><path d="M3 3v13M17 3v13" stroke="#2a4fb8" strokeWidth="1.5" /><Lbl x={10} y={17} t="Y" s={10} w={false} /></g>,
  vz: <g><path d="M3 3h14" stroke="#d81818" strokeWidth="2" /><path d="M3 3v13M1 13l2 4 2-4" stroke="#1a9a30" strokeWidth="1.5" fill="none" /><Lbl x={12} y={17} t="Z" s={10} w={false} /></g>,
  vmx: <g><path d="M3 3h13" stroke="#1a9a30" strokeWidth="2" /><path d="M16 3v13M14 13l2 4 2-4" stroke="#2a4fb8" strokeWidth="1.5" fill="none" /><Rq x={14} y={1} s={4} /><Lbl x={7} y={17} t="-X" s={10} w={false} /></g>,
  micro: <g><rect x="1" y="2" width="9" height="7" fill="#f6e45a" stroke="#333" /><path d="M8 17h10M13 5l4 4-5 6" stroke="#333" strokeWidth="2" fill="none" /><circle cx="12" cy="12" r="2" fill="#ddd" stroke="#333" /></g>,
  solid: <g><path d="M3 5l7-3 7 3v9l-7 4-7-4z" fill="#3f84c8" stroke="#1a3f70" /><path d="M9 9l5-2v6l-5 2z" fill="#174a80" /></g>,
  frame: <g><path d="M5 18L7 4h8l2 14" stroke="#2a2a2a" strokeWidth="1.8" fill="none" /><path d="M4 16L6 5h2l7-2" stroke="#c0a020" strokeWidth="1" fill="none" /><Rq x={5} y={3} /><Rq x={14} y={3} /><rect x="3.5" y="16" width="3" height="3" fill="#1a9a30" /><rect x="15.5" y="16" width="3" height="3" fill="#1a9a30" /></g>,
  cam: <g><rect x="2" y="5" width="13" height="10" rx="2" fill="#8f8f8f" stroke="#333" /><rect x="13" y="7" width="6" height="6" rx="2" fill="#bbb" stroke="#333" /><rect x="5" y="11" width="2" height="2" fill="#d81818" /><rect x="8" y="11" width="2" height="2" fill="#f7e438" /><rect x="11" y="11" width="2" height="2" fill="#2a4fb8" /></g>,
  beam: <g><Beam x={7} y={1} /><g transform="translate(0 7)"><Dia /></g></g>,
  n: <g><rect x="2" y="4" width="16" height="2.2" fill="#c8282a" /><rect x="2" y="6.2" width="16" height="2.4" fill="#2a3fb0" /><Lbl x={10} y={17} t="N" /></g>,
  vyI: <g><Dia /><Lbl x={12} y={18} t="Vy" /></g>,
  vzI: <g><Dia /><Lbl x={12} y={18} t="Vz" /></g>,
  mt: <g><Dia /><Lbl x={11} y={18} t="MT" /></g>,
  my: <g><Dia /><Lbl x={11} y={18} t="My" /></g>,
  mz: <g><Dia /><Lbl x={11} y={18} t="Mz" /></g>,
  py: <g><Dia grey /><Lbl x={11} y={18} t="py" c="#9a9a9a" w={false} /></g>,
  pz: <g><Dia grey /><Lbl x={11} y={18} t="pz" c="#9a9a9a" w={false} /></g>,
  rGreen: <g><path d="M3 8l4-5 5 3v3H3z" fill="#2f9a3c" stroke="#175a20" /><ellipse cx="7" cy="9" rx="5" ry="2" fill="#3fae4c" /><path d="M12 4h7M15 2l-3 2 3 2" stroke="#14a014" strokeWidth="1.6" fill="none" /><path d="M8 18v-6M6 14l2-3 2 3" stroke="#14a014" strokeWidth="1.6" fill="none" /></g>,
  wave: <g><Beam x={7} y={1} /><path d="M1 13h18" stroke="#3a6ec0" /><path d="M1 13c3 6 6 6 9 0s6-6 9 0" stroke="#d84868" fill="none" /></g>,
  list: <g><rect x="2" y="2" width="16" height="16" fill="#dce4f0" stroke="#333" /><Bars y={3} c="#2a3f90" /><Bars y={8} c="#2a3f90" /><Bars y={13} c="#2a3f90" /><rect x="3" y="6" width="6" height="1.4" fill="#d81818" /><rect x="11" y="11" width="6" height="1.4" fill="#d81818" /></g>,
  listC: <g><path d="M3 1.5h11l3 3v14H3z" fill="#fff" stroke="#333" /><rect x="5" y="4" width="5" height="2.2" fill="#d81818" /><rect x="5" y="7" width="5" height="2.2" fill="#f7e438" /><rect x="5" y="10" width="5" height="2.2" fill="#2f9a3c" /><rect x="5" y="13" width="5" height="2.2" fill="#2a4fb8" /><path d="M11 5h4M11 8h4M11 11h4M11 14h4" stroke="#333" /></g>,
  // table panel
  tRes: <g><rect x="2" y="2" width="16" height="16" fill="#c6d0d8" stroke="#333" /><polygon points="4,16 16,16 16,5" fill="#6fc06a" stroke="#1a7a20" /></g>,
  tAdd: <g><rect x="2" y="2" width="16" height="16" fill="#c6d0d8" stroke="#333" /><path d="M4 10h6M7 5v10M4 15h6" stroke="#222" strokeWidth="1.4" /><path d="M11 7h6M14 4v6" stroke="#222" strokeWidth="1.4" /></g>,
  tDown: <g><rect x="2" y="2" width="16" height="16" fill="#c6d0d8" stroke="#333" /><path d="M10 3v12M6 11l4 5 4-5" stroke="#1a3f80" strokeWidth="2.4" fill="none" /></g>,
  tDia: <g><rect x="2" y="2" width="16" height="16" fill="#e4e8ee" stroke="#333" /><path d="M2 9h16" stroke="#333" /><polygon points="10,16 18,10 18,16" fill="#e31a1a" /><polygon points="2,12 2,16 10,16" fill="#2a3fd0" /></g>,
  tPrev: <g><rect x="2" y="4" width="16" height="11" fill="#c6d0d8" stroke="#444" /><path d="M15 9.5H6M9 6.5l-4 3 4 3" stroke="#2a5ab0" strokeWidth="1.8" fill="none" /><path d="M4 15v3M8 15v3M12 15v3M16 15v3" stroke="#666" /></g>,
  tNext: <g><rect x="2" y="4" width="16" height="11" fill="#c6d0d8" stroke="#444" /><path d="M5 9.5h9M11 6.5l4 3-4 3" stroke="#2a5ab0" strokeWidth="1.8" fill="none" /><path d="M4 15v3M8 15v3M12 15v3M16 15v3" stroke="#666" /></g>,
  tCurveL: <path d="M6 3h7c2 4 0 5-2 6 2 2 2 5-1 8M7 14l3 3 3-2" fill="none" stroke="#243a70" strokeWidth="1.8" />,
  tCurveR: <path d="M14 3H8C5 7 7 9 9 10c-2 2-2 4 1 7M7 15l3 2 3-2" fill="none" stroke="#243a70" strokeWidth="1.8" />,
  tBlue: <g><rect x="2" y="4" width="16" height="12" fill="#cfd3ec" stroke="#9aa0c0" /><path d="M2 8h16M2 12h16M8 4v12M13 4v12" stroke="#7a80b0" /></g>,
  tPen: <g><rect x="2" y="5" width="15" height="13" fill="#f0ecd0" stroke="#b0aa90" /><path d="M5 9h9M5 12h9M5 15h9" stroke="#c0baa0" /><path d="M10 14l6-11 2 1-6 11z" fill="#d8c050" /></g>,
  tFilt: <g><path d="M2 7h10l-4 5v6l-2-2v-4z" fill="#3f84d2" stroke="#1a3f80" /><rect x="9" y="1" width="10" height="7" fill="#fff" stroke="#555" /><rect x="9" y="1" width="10" height="2" fill="#5f7fb0" /></g>,
  tInfo: <g><Beam x={1} y={9} /><path d="M6 15l8-5 4 1-7 6z" fill="#d8dce4" stroke="#888" /><circle cx="13" cy="6" r="5" fill="#14307a" /><rect x="12" y="5" width="2" height="4" fill="#fff" /><rect x="12" y="2.5" width="2" height="1.6" fill="#fff" /></g>,
  tBars: <g><path d="M3 1v18" stroke="#222" /><rect x="3" y="2" width="7" height="3" fill="#fbe8c4" stroke="#a01010" strokeWidth=".7" /><rect x="3" y="6" width="12" height="3" fill="#fbe8c4" stroke="#106020" strokeWidth=".7" /><rect x="3" y="10" width="9" height="3" fill="#fbe8c4" stroke="#106020" strokeWidth=".7" /><rect x="3" y="14" width="14" height="3" fill="#fbe8c4" stroke="#907a10" strokeWidth=".7" /></g>,
  tXl: <g><rect x="2" y="2" width="16" height="16" fill="#e8f3e4" stroke="#1a7a30" strokeWidth="1.4" /><rect x="4" y="5" width="12" height="10" fill="#1f8a3c" /><path d="M7 7l6 6M13 7l-6 6" stroke="#fff" strokeWidth="1.8" /></g>,
  tCalc: <g><rect x="2" y="4" width="16" height="13" rx="1" fill="#77808c" stroke="#333" /><rect x="4" y="6" width="12" height="3" fill="#3a4450" /><g fill="#fff">{[5, 8, 11, 14].map((x) => <rect key={x} x={x} y="11" width="1.5" height="3" />)}</g></g>,
};

const Grip: React.FC = () => (
  <div className="w-[8px] h-[20px] shrink-0 flex flex-col items-center justify-center gap-[2px]">
    {[0, 1, 2, 3, 4].map((i) => <span key={i} className="block w-[2px] h-[2px] bg-[#a2a9b4]" />)}
  </div>
);

const Caret: React.FC = () => (
  <svg width="7" height="4" viewBox="0 0 7 4" className="block"><polygon points="0,0 7,0 3.5,4" fill="#6b6f77" /></svg>
);

const Combo: React.FC<{ wide?: boolean }> = ({ wide }) => (
  <div className={`h-[19px] ml-px mr-[3px] shrink-0 bg-white border border-[#dfe2e8] flex items-center pl-[3px] text-[11px] text-black font-['Noto_Sans',sans-serif] ${wide ? "w-[155px]" : "w-[133px]"}`}>
    <span className="flex-1 whitespace-nowrap">CC1 - Peso proprio</span>
    <span className="w-[15px] h-[17px] bg-[#e2e4e8] flex items-center justify-center"><Caret /></span>
  </div>
);

function renderItems(items: string[]) {
  return items.map((it, i) => {
    if (it === "grip") return <Grip key={i} />;
    if (it === "gap2") return <span key={i} className="w-[2px] shrink-0" />;
    if (it === "gap3") return <span key={i} className="w-[3px] shrink-0" />;
    if (it === "|") return <span key={i} className="w-[8px] h-[18px] shrink-0 flex justify-center"><span className="w-px h-full bg-[#a8adb8]" /></span>;
    if (it === "|s") return <span key={i} className="w-[5px] h-[18px] shrink-0 flex justify-center"><span className="w-px h-full bg-[#a8adb8]" /></span>;
    if (it === "|w") return <span key={i} className="w-[11px] h-[18px] shrink-0 flex justify-center"><span className="w-px h-full bg-[#a8adb8]" /></span>;
    if (it === "v") return <span key={i} className="w-[13px] shrink-0 flex items-center justify-center"><Caret /></span>;
    if (it === "combo") return <Combo key={i} wide />;
    if (it === "combo2") return <Combo key={i} />;
    const active = it[0] === "*";
    const name = active ? it.slice(1) : it;
    return (
      <span key={i} className={`w-[22px] h-[22px] shrink-0 flex items-center justify-center rounded-[2px] ${active ? "bg-gradient-to-b from-[#fde9b8] to-[#f8b850] border border-[#c6a872]" : ""}`}>
        <svg width="19" height="19" viewBox="0 0 20 20" className="block">{ICONS[name]}</svg>
      </span>
    );
  });
}

const TB1 = ["grip", "new", "open", "drB", "drBl", "save", "notes", "print", "prev", "|", "undo", "redo", "|", "para", "ell", "tgt", "noteP", "winY", "|", "tblL", "*tbl", "|", "load", "combo", "left", "right", "key", "xxG", "*eye", "*xx", "|", "glass", "ab1", "ab2", "grip", "gap3", "hand", "dots", "pl1", "*pl2", "pl3", "grid3", "conn", "|", "node2", "rot", "mir", "cross", "info", "cfg", "gears"];
const TB1B = ["grip", "gap3", "expA", "expB", "expC", "expD"];
const TB2 = ["grip", "add", "v", "barI", "truss", "barI2", "supG", "edit", "|", "lod", "lodT", "sup", "col", "|", "dim", "v", "dimX", "|", "sel", "|", "flow", "v", "gap3", "grip", "gap3", "hand2", "zoomP", "zoomX", "cube", "cube2", "|", "vx", "vy", "vz", "vmx", "v", "micro", "v", "|", "solid", "v", "grip", "gap2", "*frame", "cam", "|", "beam", "n", "vyI", "vzI", "mt", "my", "mz", "py", "pz", "|", "rGreen", "wave", "list", "|", "listC"];
const TB3 = ["tRes", "tAdd", "tDown", "*tDia", "|", "tPrev", "tNext", "|", "*tCurveL", "*tCurveR", "|", "tBlue", "tPen", "|", "gap2", "combo2", "|", "left", "right", "|", "tFilt", "|s", "tInfo", "|s", "*tBars", "|w", "tXl", "|", "tCalc"];

const MENU = [
  { w: "w-[33px]", a: "Fi", u: "l", b: "e" },
  { w: "w-[60px]", a: "Mo", u: "d", b: "ifica" },
  { w: "w-[64px]", a: "", u: "V", b: "isualizza" },
  { w: "w-[57px]", a: "", u: "I", b: "nserisci" },
  { w: "w-[52px]", a: "", u: "C", b: "alcola" },
  { w: "w-[57px]", a: "", u: "R", b: "isultati" },
  { w: "w-[65px]", a: "", u: "S", b: "trumenti" },
  { w: "w-[51px]", a: "", u: "T", b: "abella" },
  { w: "w-[56px]", a: "", u: "O", b: "pzioni" },
  { w: "w-[60px]", a: "", u: "M", b: "odules" },
  { w: "w-[56px]", a: "", u: "F", b: "inestra" },
  { w: "w-[95px]", a: "", u: "M", b: "oduli aggiuntivi" },
];

const COLS = "grid-cols-[46px_71px_66px_78px_78px_78px_78px_78px_78px_78px_504px]";

interface RowData {
  node: React.ReactNode;
  vals: string[];
  bold?: number;
  boldCls?: string;
  tint?: boolean;
  sec?: string;
}

const Sub: React.FC<{ a: string; b: string }> = ({ a, b }) => (
  <span>{a}<span className="text-[11px] relative top-[2px] ml-px">{b}</span></span>
);

const ROWS: RowData[] = [
  { node: "1", vals: ["0.000", "2.9", "-2.7", "1.1", "0.3", "0.2", "0.2", "0.6"], sec: "3 - RO 193.7x22.2" },
  { node: "2", vals: ["4.588", "3.3", "-1.9", "2.7", "0.3", "0.3", "0.3", "0.4"] },
  { node: <Sub a="Max u" b="x" />, vals: ["4.588", "3.3", "-1.9", "2.7", "0.3", "0.3", "0.3", "0.4"], bold: 2, boldCls: "text-[#000080]", tint: true },
  { node: <Sub a="Min u" b="x" />, vals: ["0.000", "2.9", "-2.7", "1.1", "0.3", "0.2", "0.2", "0.6"], bold: 2, boldCls: "text-[#800000]", tint: true },
  { node: <Sub a="Max u" b="y" />, vals: ["4.588", "3.3", "-1.9", "2.7", "0.3", "0.3", "0.3", "0.4"], bold: 3, boldCls: "text-[#000080]", tint: true },
  { node: <Sub a="Min u" b="y" />, vals: ["0.000", "2.9", "-2.7", "1.1", "0.3", "0.2", "0.2", "0.6"], bold: 3, boldCls: "text-[#800000]", tint: true },
];

// offset of the small tick inside each number column, C to I
const TICKS = ["w-[6px]", "w-[40px]", "w-[38px]", "w-[24px]", "w-[39px]", "w-[46px]", "w-[39px]"];

const HEAD = ["", "B", "C", "D", "E", "F", "G", "H", "I", "J"];

const TABS = [
  { t: "Sommario", w: "w-[55px]" },
  { t: "Aste - Forze interne", w: "w-[101px]" },
  { t: "Set di aste - Forze interne", w: "w-[130px]" },
  { t: "Sezioni trasversali - Forze interne", w: "w-[164px]" },
  { t: "Nodi - Reazioni vincolari", w: "w-[124px]" },
  { t: "Nodi - Spostamenti generalizzati", w: "w-[160px]" },
  { t: "Aste - Spostamenti generalizzati locali", w: "w-[186px]", on: true },
  { t: "Aste - Spostamenti generalizzati globali", w: "w-[192px]" },
];

const STATUS = [
  { t: "SNAP", w: "w-[36px]" },
  { t: "GRIGLIA", w: "w-[50px]" },
  { t: "ORTO", w: "w-[51px]" },
  { t: "OSNAP", w: "w-[46px]" },
  { t: "LINEEG", w: "w-[45px]" },
  { t: "DXF", w: "w-[29px]" },
];

export default function App() {
  return (
    <div className="w-[1273px] h-[1027px] overflow-hidden flex flex-col bg-gradient-to-b from-[#b4cfe8] to-[#a9c8e6] border border-[#45525f] rounded-t-[7px] rounded-b-[4px] font-['Liberation_Sans',sans-serif] text-[11px] text-[#111]">
      {/* title bar */}
      <div className="h-[28px] shrink-0 flex">
        <div className="flex items-center flex-1 pl-[7px] pb-[1px]">
          <svg width="18" height="18" viewBox="0 0 20 20" className="block mr-[3px]">
            <path d="M3 3h14M3 7h14M3 11h14M6 3v13M14 3v13" stroke="#2a5a9a" strokeWidth="1.8" fill="none" />
            <rect x="1" y="11" width="6" height="8" fill="#e4c85a" stroke="#5a4a10" strokeWidth=".8" />
            <rect x="15" y="15" width="3" height="3" fill="#2f9a3c" />
          </svg>
          <span className="text-[12px] font-['Noto_Sans',sans-serif] text-black">RSTAB 8.01 (64bit) - [Stadio]</span>
        </div>
        <div className="flex h-[19px] mr-[7px] border-x border-b border-[#4d5a68] rounded-b-[4px] overflow-hidden">
          <span className="w-[27px] bg-gradient-to-b from-[#c9d8e8] to-[#8ea3b8] flex items-center justify-center pt-[6px] border-r border-[#5c6b7a]"><span className="block w-[12px] h-[4px] bg-white border border-[#4a5a6a]" /></span>
          <span className="w-[26px] bg-gradient-to-b from-[#c9d8e8] to-[#8ea3b8] flex items-center justify-center border-r border-[#5c6b7a]"><span className="block w-[11px] h-[9px] border-2 border-[#f4f6f8] outline outline-1 outline-[#4a5a6a]" /></span>
          <span className="w-[47px] bg-gradient-to-b from-[#dc8e7c] to-[#c04028] flex items-center justify-center">
            <svg width="14" height="11" viewBox="0 0 14 11"><path d="M2 1l10 9M12 1L2 10" stroke="#3a2a2a" strokeWidth="3.6" /><path d="M2 1l10 9M12 1L2 10" stroke="#fff" strokeWidth="2.2" /></svg>
          </span>
        </div>
      </div>

      {/* client area */}
      <div className="mx-[6px] mb-[6px] h-[992px] shrink-0 border border-[#7b8796] bg-[#d0d4dc] flex flex-col">
        {/* menu */}
        <div className="h-[25px] shrink-0 flex items-center pl-[3px] pr-[4px] font-['Noto_Sans',sans-serif] text-[11px] text-[#4c545e] bg-gradient-to-b from-[#d6d9e0] to-[#ced2da]">
          <Grip />
          <svg width="18" height="14" viewBox="0 0 18 14" className="block mr-[8px]">
            <rect width="18" height="14" fill="#1c3a78" />
            <path d="M1 11h16M9 2v9M9 2L2 11M9 2l7 9" stroke="#fff" strokeWidth="1.2" fill="none" />
          </svg>
          <div className="flex pb-[1px]">
            {MENU.map((m) => (
              <span key={m.b + m.w} className={`${m.w} whitespace-nowrap`}>
                {m.a}<span className="underline">{m.u}</span>{m.b}
              </span>
            ))}
          </div>
          <div className="ml-auto flex items-center gap-[7px] pr-[2px] text-[#7f858e]">
            <svg width="9" height="9" viewBox="0 0 9 9"><rect y="7" width="8" height="2" fill="#7f858e" /></svg>
            <svg width="10" height="9" viewBox="0 0 10 9"><path d="M2.5.5h7v5M.5 2.5h7v6h-7z" fill="none" stroke="#7f858e" /></svg>
            <svg width="9" height="9" viewBox="0 0 9 9"><path d="M1 1l7 7M8 1L1 8" stroke="#7f858e" strokeWidth="1.8" /></svg>
          </div>
        </div>
        {/* toolbars */}
        <div className="h-[25px] shrink-0 flex items-center pl-[3px]">
          <div className="h-[24px] flex items-center bg-gradient-to-b from-[#eef0f4] to-[#c9ced9] rounded-r-[3px] border-b border-[#a9afba]">{renderItems(TB1)}</div>
          <div className="h-[24px] ml-[3px] flex items-center bg-gradient-to-b from-[#eef0f4] to-[#c9ced9] rounded-r-[3px] border-b border-[#a9afba]">{renderItems(TB1B)}</div>
        </div>
        <div className="h-[26px] shrink-0 flex items-center pl-[3px]">
          <div className="h-[25px] flex items-center bg-gradient-to-b from-[#eef0f4] to-[#c9ced9] rounded-r-[3px] border-b border-[#a9afba]">{renderItems(TB2)}</div>
        </div>
        <div className="h-[1px] shrink-0" />

        {/* 3D view */}
        <div className="h-[650px] w-[1255px] shrink-0 ml-[2px] relative bg-white border-t border-l border-[#5b6470]">
          <div className="absolute left-[4px] top-[5px] text-[10.5px] leading-[14px] text-black">
            <div>Spostamenti generalizzati globali u [mm]</div>
            <div>CC1 : Peso proprio</div>
          </div>
          <Stadium />
          <div className="absolute left-[4px] bottom-[6px] text-[10.5px] leading-[14px] text-black">Max u: 338.7, Min u: 0.0 mm</div>
        </div>

        <div className="h-[3px] shrink-0 bg-[#e9ebef]" />

        {/* result panel */}
        <div className="flex-1 min-h-0 flex flex-col">
          <div className="h-[47px] shrink-0 bg-gradient-to-b from-[#e9edf7] via-[#e6eaf4] to-[#cfd4de] flex flex-col pl-[3px]">
            <div className="h-[23px] shrink-0 flex items-center font-['Noto_Sans',sans-serif] text-[#3c4652] text-[11px] pl-[1px] pt-[2px]">
              <span>4.7 Aste - Spostamenti generalizzati locali</span>
              <span className="ml-auto flex items-center gap-[8px] pr-[6px]">
                <svg width="9" height="10" viewBox="0 0 9 10"><path d="M2.5.5v5h4v-5zM.5 5.5h8M4.5 5.5v4" stroke="#555" fill="none" /></svg>
                <svg width="9" height="9" viewBox="0 0 9 9"><path d="M1 1l7 7M8 1L1 8" stroke="#555" strokeWidth="1.3" /></svg>
              </span>
            </div>
            <div className="flex-1 flex items-center pl-[6px] pb-[2px]">{renderItems(TB3)}</div>
          </div>

          {/* table */}
          <div className="h-[155px] shrink-0 border-t-2 border-[#6f757c] bg-[#f0f0f0] flex pl-[3px] pt-[2px]">
            <div className={`grid ${COLS} grid-rows-[13px_16px_17px_16px_16px_16px_16px_16px_16px] h-[142px] w-[1235px] text-[#111] font-['Liberation_Sans',sans-serif] text-[11px] tracking-[-0.25px]`}>
              {/* letters */}
              <div className="bg-[#e9e9e9] border-r border-b border-[#9a9a9a]" />
              <div className="bg-[#3c97ee] text-[#e8f2ff] border-r border-b border-[#8a8a8a] flex items-center justify-center leading-none">A</div>
              {HEAD.slice(1).map((h) => (
                <div key={h} className="bg-[#e2e2e2] border-t border-l border-t-white border-l-white border-r border-b border-r-[#8a8a8a] border-b-[#8a8a8a] flex items-center justify-center leading-none">{h}</div>
              ))}
              {/* headers */}
              <div className="row-span-2 bg-[#eeeeee] border-r border-b border-[#9a9a9a] flex flex-col items-center pt-[2px] leading-[14px]"><span>Asta</span><span>nr.</span></div>
              <div className="bg-[#f0f0f0] border-r border-[#a8a8a8] flex items-center justify-center pt-px">Nodo</div>
              <div className="bg-[#f0f0f0] border-r border-[#a8a8a8] flex items-center justify-center pt-px">Posizione</div>
              <div className="col-span-4 bg-[#f0f0f0] border-r border-[#a8a8a8] flex items-center justify-center pt-px">Spostamenti [mm]</div>
              <div className="col-span-3 bg-[#f0f0f0] border-r border-[#a8a8a8] flex items-center justify-center pt-px">Rotazioni [mrad]</div>
              <div className="row-span-2 bg-[#f0f0f0] border-b border-[#a8a8a8] flex items-end justify-center pb-px">Sezione trasversale</div>
              <div className="bg-[#f0f0f0] border-r border-b border-[#a8a8a8] flex items-center justify-center">nr.</div>
              <div className="bg-[#f0f0f0] border-r border-b border-[#a8a8a8] flex items-center justify-center">x [m]</div>
              <div className="bg-[#f0f0f0] border-r border-b border-[#a8a8a8] flex items-center justify-center">|u|</div>
              {["u", "u", "u", "\u03c6", "\u03c6", "\u03c6"].map((a, i) => (
                <div key={i} className="bg-[#f0f0f0] border-r border-b border-[#a8a8a8] flex items-center justify-center font-['Noto_Sans',sans-serif] text-[9.5px] tracking-[1px]">
                  <Sub a={a} b={["x", "y", "z", "x", "y", "z"][i]} />
                </div>
              ))}
              {/* data */}
              {ROWS.map((r, ri) => (
                <React.Fragment key={ri}>
                  <div className="bg-[#f0f0f0] border-b border-r border-[#9a9a9a] flex">
                    <span className={`flex-1 flex items-center justify-center leading-none border-t border-l border-t-white border-l-white ${ri === 0 ? "bg-[#3c97ee] text-white" : "bg-[#e2e2e2]"}`}>{ri === 0 ? "1" : ""}</span>
                  </div>
                  <div className={`border-b border-r border-[#a0a0a0] flex items-center justify-center pt-[3px] ${r.tint ? "bg-[#f3ebfd]" : "bg-white"}`}>{r.node}</div>
                  <div className={`border-b border-r border-[#a0a0a0] flex items-center justify-end pr-[4px] pt-[3px] tracking-normal ${r.tint ? "bg-[#f3ebfd]" : "bg-white"}`}>{r.vals[0]}</div>
                  {r.vals.slice(1).map((v, vi) => (
                    <div key={vi} className={`border-b border-r border-[#a0a0a0] flex items-center pr-[4px] tracking-normal ${r.tint ? "bg-[#f3ebfd]" : "bg-white"}`}>
                      <span className={`${TICKS[vi]} h-[10px] shrink-0 border-r border-[#bdbdbd]`} />
                      <span className={`flex-1 text-right pt-[3px] ${r.bold === vi + 1 ? `font-bold text-[12px] tracking-[0.4px] ${r.boldCls}` : ""}`}>{v}</span>
                    </div>
                  ))}
                  <div className={`border-b border-[#a0a0a0] flex items-center pl-[4px] pt-[3px] ${r.tint ? "bg-[#f3ebfd]" : "bg-white"}`}>{r.sec || ""}</div>
                </React.Fragment>
              ))}
            </div>
            {/* scroll bar */}
            <div className="w-[18px] h-[142px] shrink-0 flex flex-col items-center bg-[#efefef]">
              <span className="h-[15px] flex items-center justify-center"><svg width="7" height="4" viewBox="0 0 7 4"><polygon points="0,4 7,4 3.5,0" fill="#555" /></svg></span>
              <span className="w-[15px] h-[17px] bg-gradient-to-b from-[#f6f6f6] to-[#dadada] border border-[#9a9a9a] rounded-[2px]" />
              <span className="flex-1" />
              <span className="h-[15px] flex items-center justify-center"><Caret /></span>
            </div>
          </div>

          {/* sheet tabs */}
          <div className="h-[18px] shrink-0 flex bg-[#f0f0f0] border-t border-b-2 border-t-[#808080] border-b-[#5c5c5c] pl-[2px] text-[11px] tracking-[-0.25px] text-[#111] leading-none">
            {TABS.map((t) => (
              <div key={t.t} className={`${t.w} shrink-0 flex items-center justify-center whitespace-nowrap border-r border-[#7a7a7a] rounded-br-[3px] ${t.on ? "bg-[#fbfbfb] h-[16px]" : "bg-[#efefef] h-[15px]"}`}>{t.t}</div>
            ))}
            <div className="ml-auto mr-[2px] flex items-center h-[15px]">
              {["\u2759\u25c2", "\u25c2", "\u25b8", "\u25b8\u2759"].map((g, i) => (
                <span key={g} className={`w-[15px] h-[15px] flex items-center justify-center border border-[#d0d0d0] text-[9px] bg-[#f6f6f6] ${i < 2 ? "text-[#a8a8a8]" : "text-black"}`}>{g}</span>
              ))}
            </div>
          </div>
          <div className="h-[17px] shrink-0 bg-[#efedec]" />

          {/* status bar */}
          <div className="flex-1 min-h-0 flex items-center bg-gradient-to-b from-[#d6d9dd] via-[#c3c8ce] to-[#a8afb8] border-t border-[#8c949e] text-[#30343a]">
            <span className="pl-[5px] w-[517px] font-['Noto_Sans',sans-serif] text-[11px]">Pronto</span>
            <div className="flex gap-[1px] text-[11.5px] tracking-[-0.2px]">
              {STATUS.map((s) => (
                <span key={s.t} className={`${s.w} h-[20px] flex items-center justify-center border-t border-l border-t-[#333] border-l-[#333] border-r border-b border-r-[#eee] border-b-[#eee]`}>{s.t}</span>
              ))}
            </div>
            <span className="w-[153px]" />
            {["w-[89px]", "w-[73px]", "w-[74px]", "w-[84px]"].map((w) => (
              <span key={w} className={`${w} h-[20px] border-l border-[#8e959e]`} />
            ))}
          </div>
        </div>
      </div>
    </div>
  );
}
